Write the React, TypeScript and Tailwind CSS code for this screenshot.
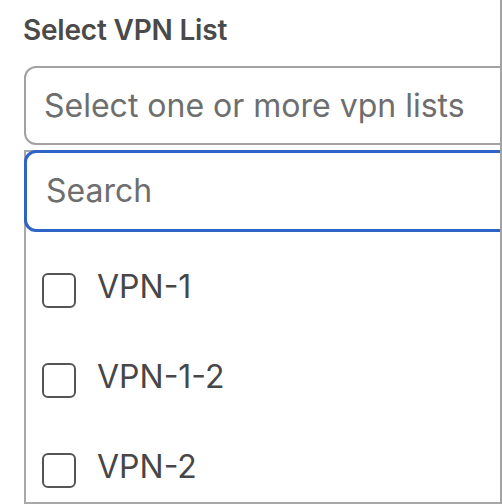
import React from "react";

const items = ["VPN-1", "VPN-1-2", "VPN-2"];

export default function App() {
  return (
    <div
      className="w-[502px] h-[504px] overflow-hidden bg-white border-r-2 border-[#a3a3a3]"
      style={{ fontFamily: "Inter, 'Noto Sans', sans-serif" }}
    >
      <div className="w-[640px] pl-[24px]">
        <div className="pt-[17px] -ml-[1px] text-[28px] leading-[27px] font-semibold text-[#4a4a4a] tracking-[-0.2px]">
          Select VPN List
        </div>
        <div className="mt-[22px] h-[79px] border-2 border-[#a2a2a2] rounded-[12px] flex items-center pl-[18px] text-[32px] text-[#6e6e6e]">
          Select one or more vpn lists
        </div>
        <div className="mt-[5px] border-l-2 border-t-2 border-b-2 border-[#a8a8a8] h-[354px]">
          <div className="-mt-[2px] -ml-[2px] h-[82px] border-[3px] border-[#2e63c8] rounded-[12px] flex items-center pl-[19px] text-[32px] text-[#6e6e6e]">
            Search
          </div>
          <div className="pt-[41px] flex flex-col gap-[55px] pl-[16px]">
            {items.map((it) => (
              <div key={it} className="flex items-center h-[35px]">
                <div className="w-[34px] h-[35px] border-2 border-[#555555] rounded-[6px] bg-white" />
                <span className="ml-[21px] text-[32px] leading-[32px] text-[#474747] -mt-[8px]">
                  {it}
                </span>
              </div>
            ))}
          </div>
        </div>
      </div>
    </div>
  );
}
